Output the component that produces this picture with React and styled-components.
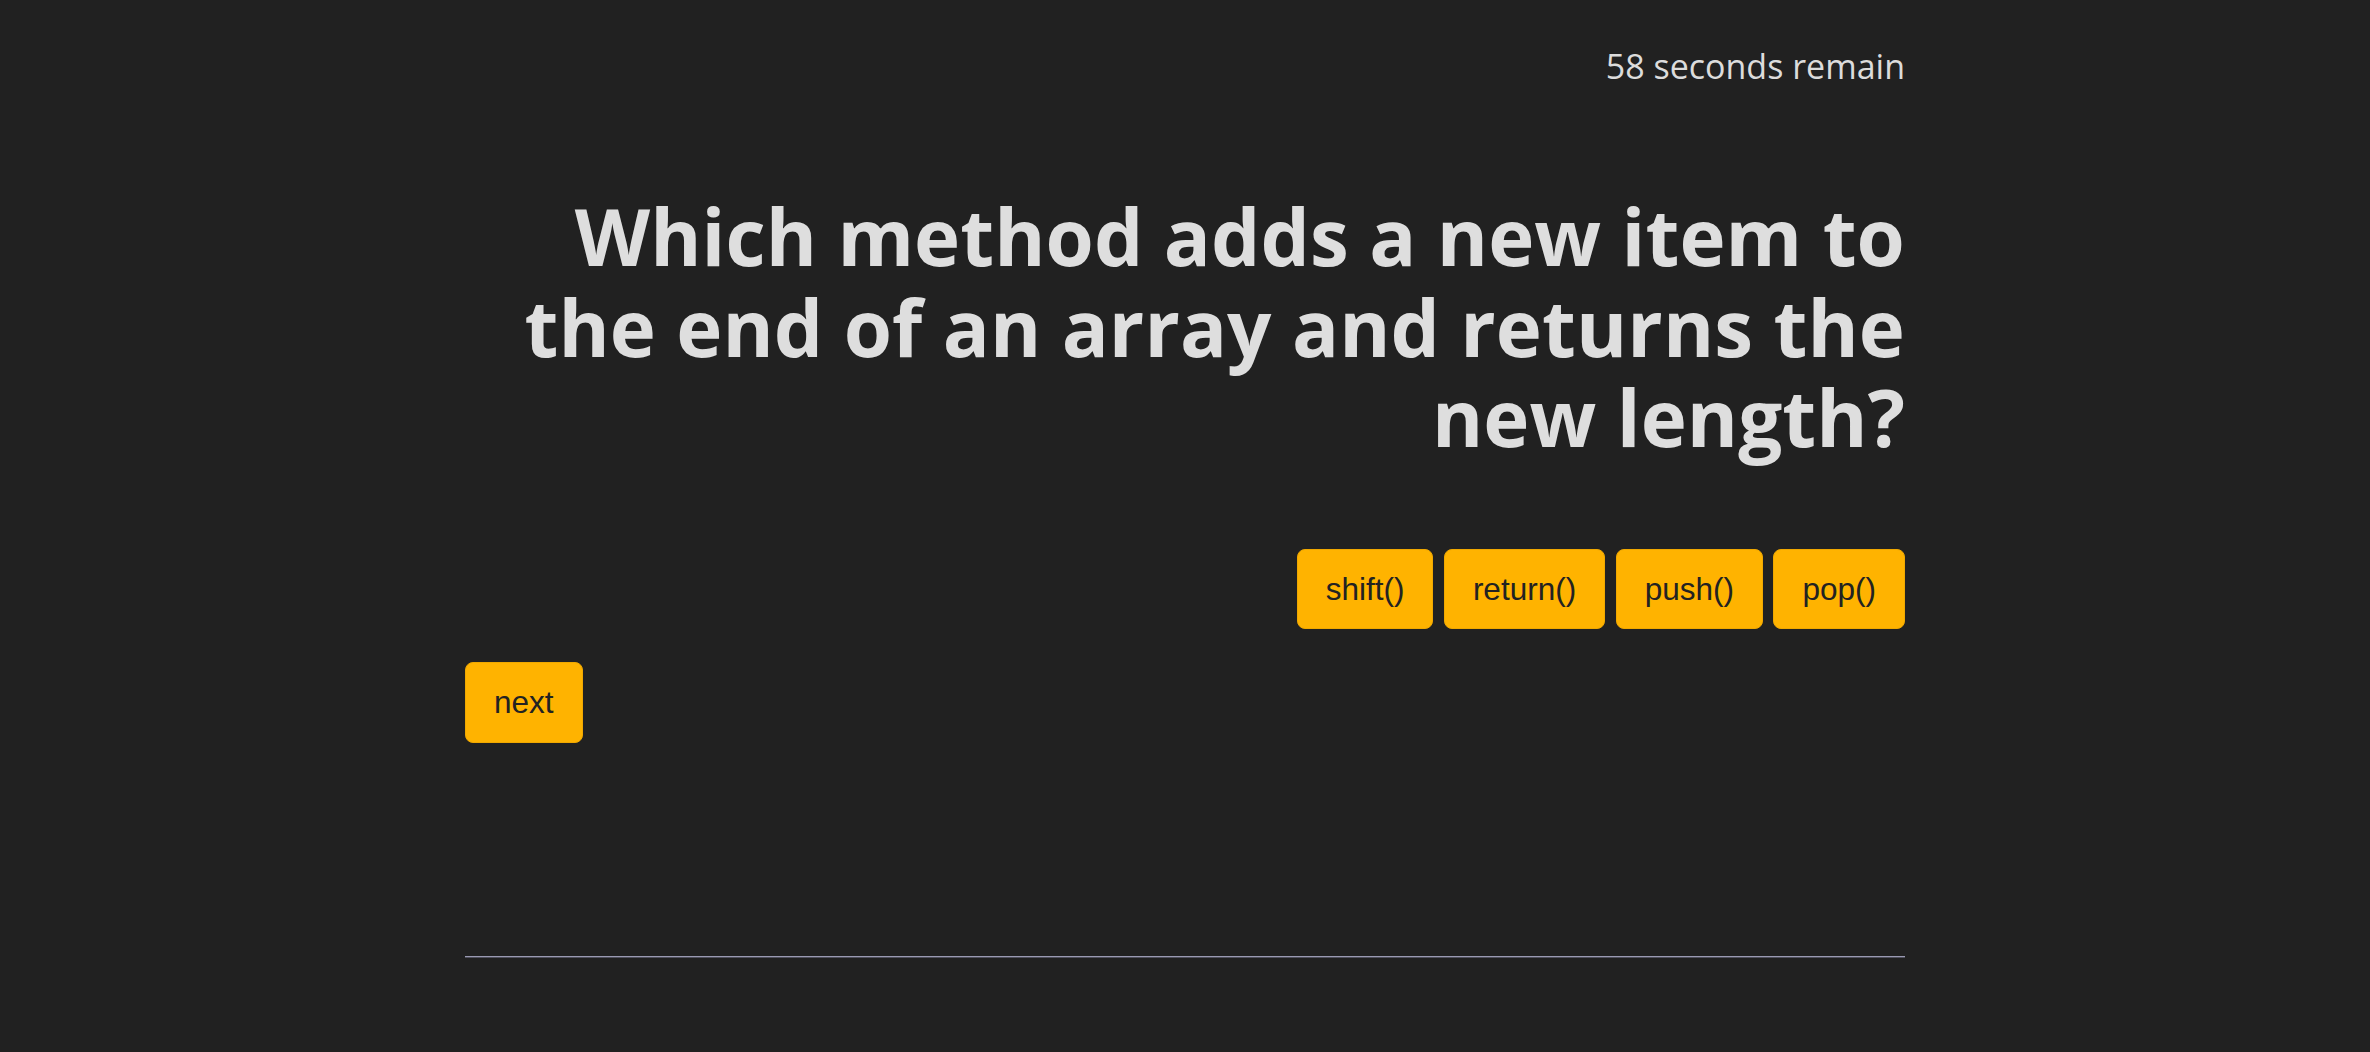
import React from 'react'
import styled, { createGlobalStyle } from 'styled-components'

const GlobalStyle = createGlobalStyle`
  html, body {
    margin: 0;
    padding: 0;
    background: #212121;
  }
  body {
    font-family: "Open Sans", "Noto Sans", sans-serif;
    color: #dedede;
  }
`

const Page = styled.div`
  width: 1440px;
  margin: 0 auto;
  padding-top: 42px;
  display: flex;
  flex-direction: column;
`

const Timer = styled.div`
  text-align: right;
  font-size: 34px;
  line-height: 48px;
  color: #dcdcdc;
`

const Question = styled.h1`
  margin: 101px 0 0;
  text-align: right;
  font-size: 78px;
  font-weight: 700;
  line-height: 90.5px;
  letter-spacing: 0.1px;
  color: #dedede;
`

const Answers = styled.div`
  margin-top: 86px;
  display: flex;
  justify-content: flex-end;
  gap: 10.5px;
`

const Button = styled.button`
  font-family: "Liberation Sans", Arial, sans-serif;
  font-size: 31.5px;
  line-height: 34.5px;
  padding: 22px 28px;
  border: 1px solid #f0a800;
  border-radius: 8px;
  background: #ffb300;
  color: #222;
  cursor: pointer;
`

const NextRow = styled.div`
  margin-top: 33px;
  display: flex;
`

const Divider = styled.hr`
  margin: 213px 0 0;
  height: 0;
  border: none;
  border-top: 1px solid #9a9ab2;
  border-bottom: 1px solid #50505e;
`

const answers = ['shift()', 'return()', 'push()', 'pop()']

export default function App() {
  return (
    <>
      <GlobalStyle />
      <Page>
        <Timer>58 seconds remain</Timer>
        <Question>Which method adds a new item to the end of an array and returns the new length?</Question>
        <Answers>
          {answers.map((a) => (
            <Button key={a}>{a}</Button>
          ))}
        </Answers>
        <NextRow>
          <Button>next</Button>
        </NextRow>
        <Divider />
      </Page>
    </>
  )
}
